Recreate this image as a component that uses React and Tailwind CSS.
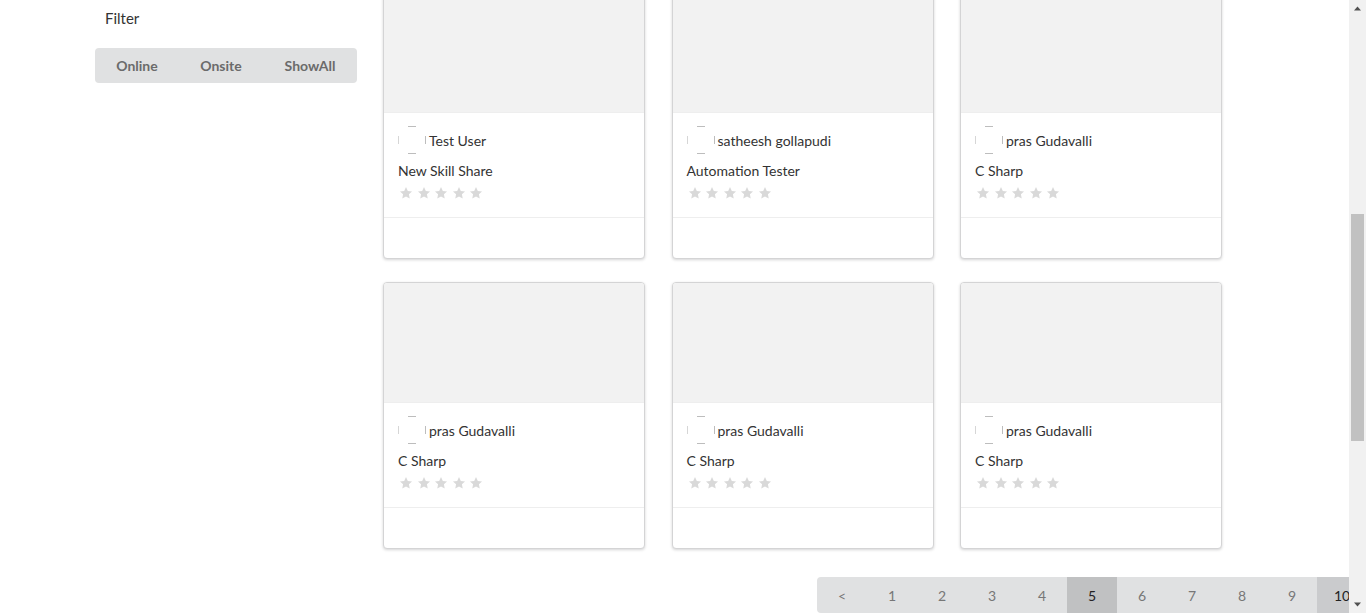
import React from "react";

const cards = [
  { user: "Test User", title: "New Skill Share" },
  { user: "satheesh gollapudi", title: "Automation Tester" },
  { user: "pras Gudavalli", title: "C Sharp" },
  { user: "pras Gudavalli", title: "C Sharp" },
  { user: "pras Gudavalli", title: "C Sharp" },
  { user: "pras Gudavalli", title: "C Sharp" },
];

const Avatar = () => (
  <svg width="28" height="28" viewBox="0 0 28 28" className="shrink-0">
    <line x1="10" y1="0.5" x2="18" y2="0.5" stroke="#bdbdbd" strokeWidth="1" />
    <line x1="10" y1="27.5" x2="18" y2="27.5" stroke="#bdbdbd" strokeWidth="1" />
    <line x1="0.5" y1="10" x2="0.5" y2="18" stroke="#d6d6d6" strokeWidth="1" />
    <line x1="27.5" y1="10" x2="27.5" y2="18" stroke="#bdbdbd" strokeWidth="1" />
  </svg>
);

const Star = () => (
  <svg width="14" height="14" viewBox="0 0 24 24">
    <path
      d="M12 1.8l3.1 6.6 7.2.9-5.3 5 1.4 7.1L12 17.9l-6.4 3.5 1.4-7.1-5.3-5 7.2-.9z"
      fill="#d9d9d9"
    />
  </svg>
);

const Card = ({ user, title }) => (
  <div className="bg-white border border-[#d4d4d5] rounded-[4px] shadow-[0_1px_3px_0_#d4d4d5] flex flex-col overflow-hidden">
    <div className="h-[120px] bg-[#f2f2f2] border-b border-[#eeeeee]" />
    <div className="px-[14px] pt-[13px] pb-[17px] flex flex-col">
      <div className="flex items-center h-[28px]">
        <Avatar />
        <span className="ml-[3px] text-[14px] text-[#333]">{user}</span>
      </div>
      <div className="mt-[9px] text-[14px] leading-[16px] text-[#333]">{title}</div>
      <div className="mt-[7px] flex gap-[3.5px] pl-[1px]">
        {[0, 1, 2, 3, 4].map((i) => (
          <Star key={i} />
        ))}
      </div>
    </div>
    <div className="h-[41px] border-t border-[#eeeeee]" />
  </div>
);

const pages = ["<", "1", "2", "3", "4", "5", "6", "7", "8", "9", "10"];

export default function App() {
  return (
    <div className="h-[613px] w-[1366px] flex overflow-hidden bg-white font-['Lato','Liberation_Sans',sans-serif]">
      <div className="w-[1349px] overflow-hidden flex flex-col">
        <div className="flex">
          <div className="ml-[95px] w-[262px] flex flex-col">
            <div className="pl-[10px] pt-[8px] text-[15px] leading-[20px] text-[#333]">Filter</div>
            <div className="mt-[20px] h-[35px] flex bg-[#e0e1e2] rounded-[4px] text-[14px] font-bold text-[#6b6b6b]">
              <div className="w-[84px] flex items-center justify-center">Online</div>
              <div className="w-[84px] flex items-center justify-center">Onsite</div>
              <div className="flex-1 flex items-center justify-center">ShowAll</div>
            </div>
          </div>
          <div className="ml-[26px] w-[839px] -mt-[8px] grid grid-cols-3 gap-x-[26.5px] gap-y-[23px]">
            {cards.map((c, i) => (
              <Card key={i} {...c} />
            ))}
          </div>
        </div>
        <div className="ml-[817px] mt-[28px] flex h-[36px] bg-[#e0e1e2] rounded-l-[4px] text-[14px] text-[#777] w-max">
          {pages.map((p) => (
            <div
              key={p}
              className={
                p === "5"
                  ? "w-[50px] flex items-center justify-center bg-[#c0c1c2] text-[#222]"
                  : p === "10"
                  ? "w-[50px] flex items-center justify-center bg-[#cacbcd] text-[#222]"
                  : "w-[50px] flex items-center justify-center"
              }
            >
              {p}
            </div>
          ))}
        </div>
      </div>
      <div className="w-[17px] h-full bg-[#f1f1f1] flex flex-col items-center">
        <svg width="17" height="17" viewBox="0 0 17 17">
          <path d="M5 10.5h7l-3.5-4z" fill="#505050" />
        </svg>
        <div className="mt-[197px] w-[13px] h-[227px] bg-[#c1c1c1]" />
        <div className="flex-1" />
        <svg width="17" height="17" viewBox="0 0 17 17">
          <path d="M5 6.5h7l-3.5 4z" fill="#505050" />
        </svg>
      </div>
    </div>
  );
}
